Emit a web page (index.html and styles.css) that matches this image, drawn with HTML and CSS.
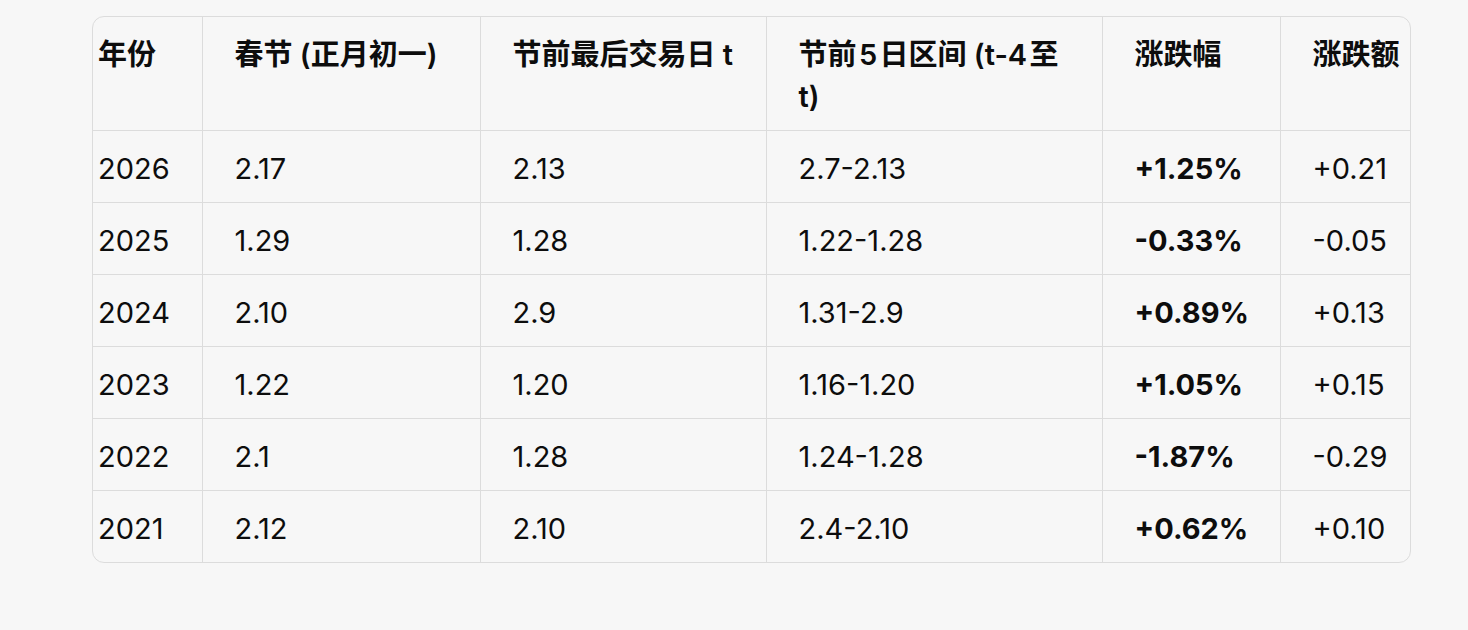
FILE: index.html
```html
<!DOCTYPE html>
<html lang="zh-CN">
<head>
<meta charset="utf-8">
<link rel="stylesheet" href="styles.css">
</head>
<body>
<div class="page">
  <div class="table-wrap">
    <table class="data">
      <colgroup>
        <col class="c1"><col class="c2"><col class="c3"><col class="c4"><col class="c5"><col class="c6">
      </colgroup>
      <thead>
        <tr>
          <th>年份</th>
          <th>春节 (正月初一)</th>
          <th>节前最后交易日 t</th>
          <th>节前&#8202;5&#8202;日区间 (t-4&#8202;至t)</th>
          <th>涨跌幅</th>
          <th>涨跌额</th>
        </tr>
      </thead>
      <tbody>
        <tr><td>2026</td><td>2.17</td><td>2.13</td><td>2.7-2.13</td><td><b>+1.25%</b></td><td>+0.21</td></tr>
        <tr><td>2025</td><td>1.29</td><td>1.28</td><td>1.22-1.28</td><td><b>-0.33%</b></td><td>-0.05</td></tr>
        <tr><td>2024</td><td>2.10</td><td>2.9</td><td>1.31-2.9</td><td><b>+0.89%</b></td><td>+0.13</td></tr>
        <tr><td>2023</td><td>1.22</td><td>1.20</td><td>1.16-1.20</td><td><b>+1.05%</b></td><td>+0.15</td></tr>
        <tr><td>2022</td><td>2.1</td><td>1.28</td><td>1.24-1.28</td><td><b>-1.87%</b></td><td>-0.29</td></tr>
        <tr><td>2021</td><td>2.12</td><td>2.10</td><td>2.4-2.10</td><td><b>+0.62%</b></td><td>+0.10</td></tr>
      </tbody>
    </table>
  </div>
</div>
</body>
</html>
```

FILE: styles.css
```css
html, body {
  margin: 0;
  padding: 0;
  background: #f7f7f7;
}
body {
  font-family: Inter, "Noto Sans CJK SC", sans-serif;
  color: #0d0d0d;
}
.page {
  padding: 16px 57px 0 92px;
}
.table-wrap {
  width: 1317px;
  border: 1px solid #dcdcdc;
  border-radius: 12px;
  overflow: hidden;
  background: #f7f7f7;
}
.data {
  border-collapse: collapse;
  table-layout: fixed;
  width: 1380px;
  font-size: 29px;
  line-height: 42px;
}
.c1 { width: 109px; }
.c2 { width: 278px; }
.c3 { width: 286px; }
.c4 { width: 336px; }
.c5 { width: 178px; }
.c6 { width: 193px; }
.data th,
.data td {
  padding: 17px 32px 12px 32px;
  text-align: left;
  vertical-align: top;
  border-left: 1px solid #dcdcdc;
  border-top: 1px solid #dcdcdc;
}
.data th {
  font-weight: 600;
  border-top: none;
}
.data td {
  font-weight: 400;
}
.data th:first-child,
.data td:first-child {
  border-left: none;
  padding-left: 5px;
}
.data b {
  font-weight: 700;
}
```
